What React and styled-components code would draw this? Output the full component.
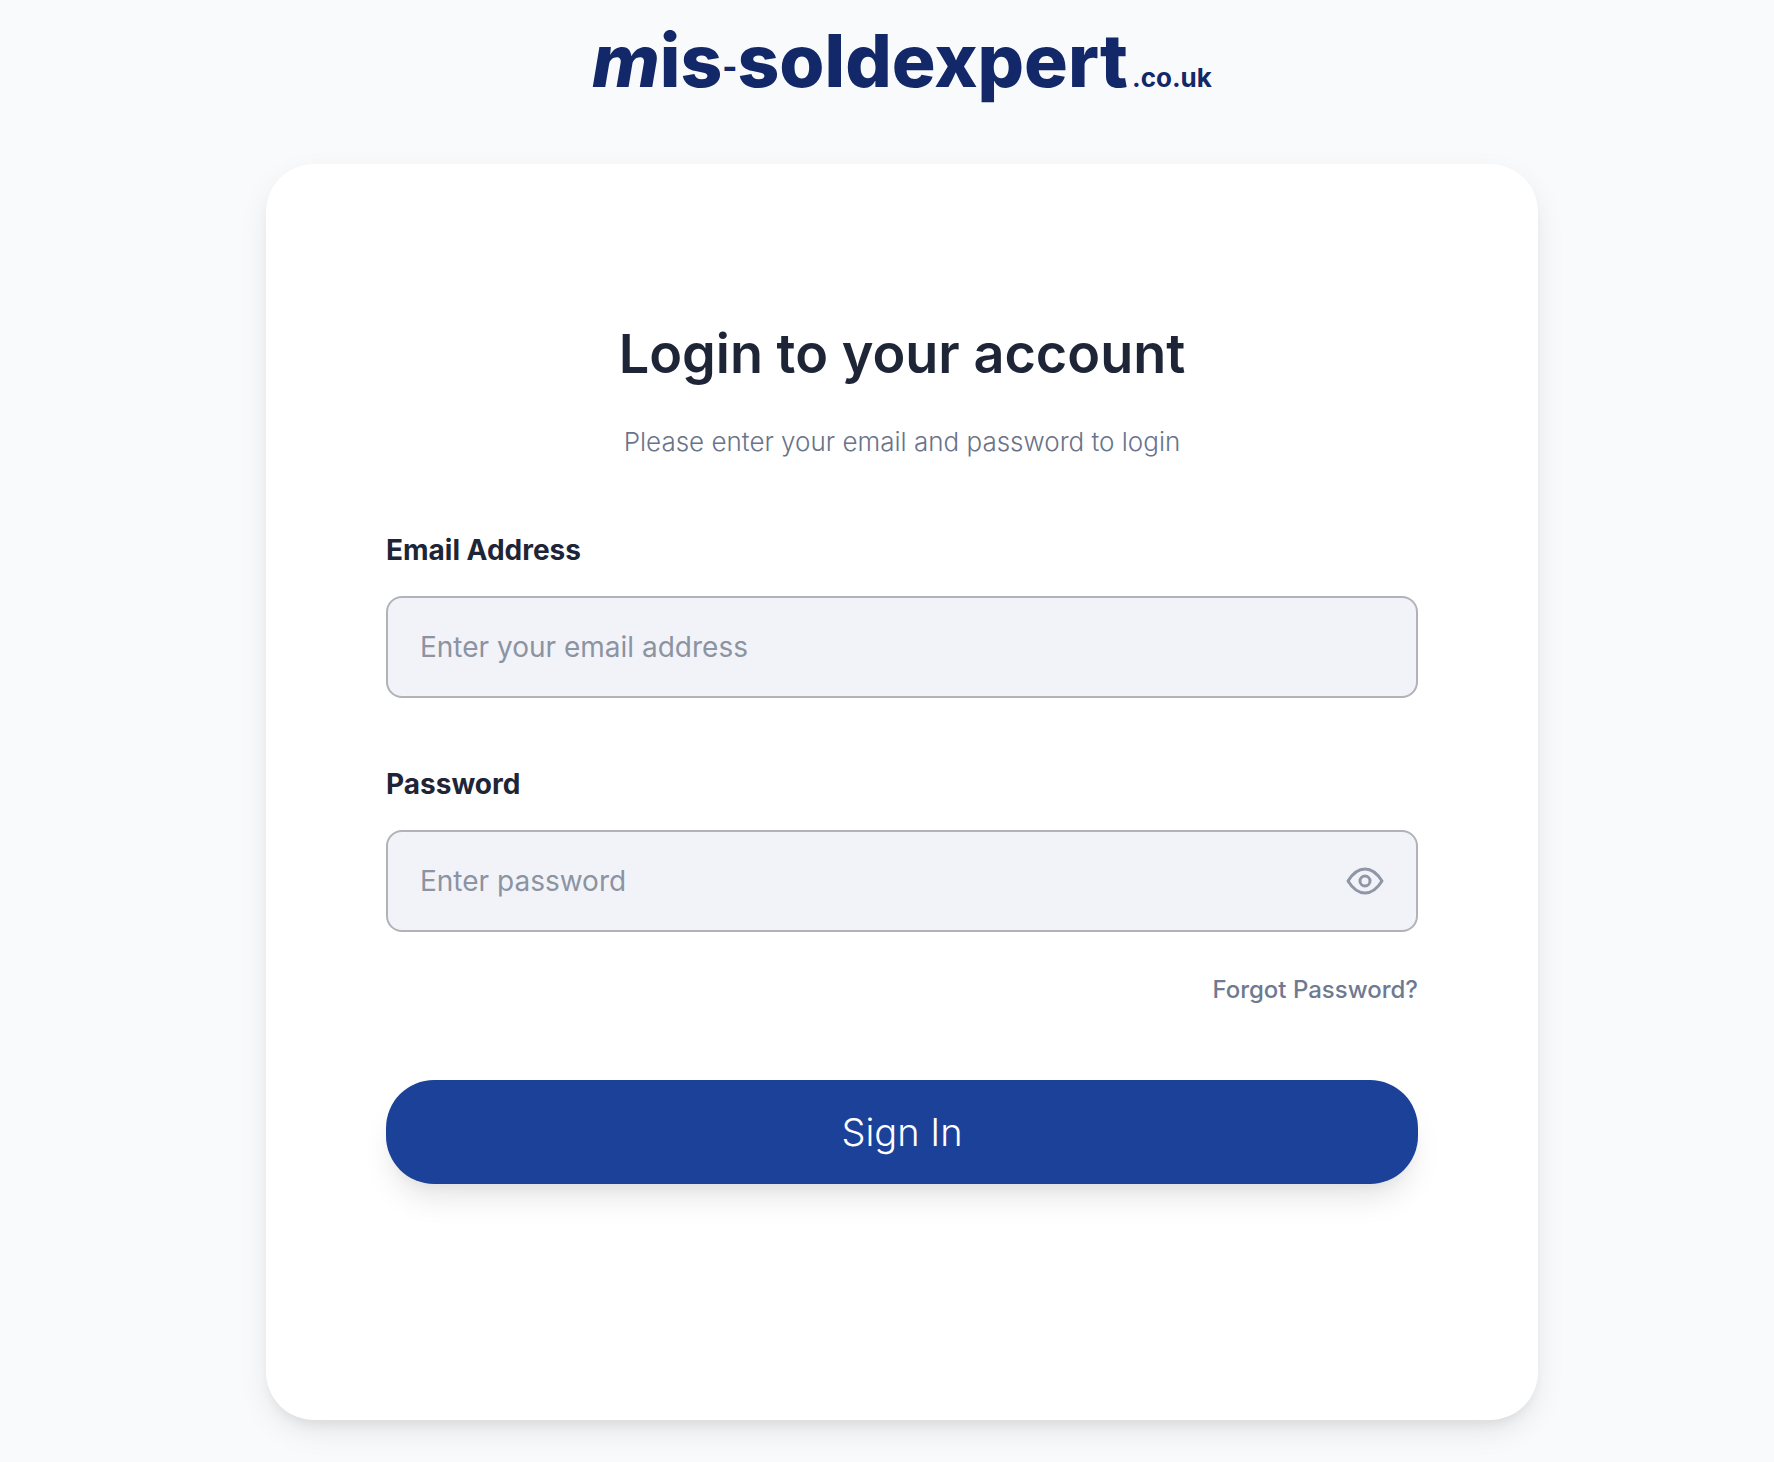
import React, { useState } from "react";
import styled, { createGlobalStyle } from "styled-components";

const GlobalStyle = createGlobalStyle`
  * {
    box-sizing: border-box;
  }

  body {
    margin: 0;
    background-color: #f9fafc;
    font-family: Inter, "Liberation Sans", sans-serif;
  }
`;

const StyledPage = styled.div`
  min-height: 100vh;
  padding: 24px 0 42px 30px;
  display: flex;
  flex-direction: column;
  align-items: center;
`;

const Logo = styled.a`
  height: 140px;
  display: flex;
  align-items: baseline;
  color: #122868;
  font-size: 73px;
  font-weight: 800;
  line-height: 74px;
  text-decoration: none;
`;

const LogoSlant = styled.span`
  font-style: italic;
`;

const LogoDash = styled.span`
  align-self: flex-start;
  font-size: 32px;
  line-height: 86px;
`;

const LogoDomain = styled.span`
  margin-left: 4px;
  font-size: 26px;
  font-weight: 700;
`;

const Card = styled.main`
  width: 73%;
  max-width: 1272px;
  min-height: 1256px;
  padding: 154px 120px;
  border-radius: 48px;
  background-color: #fff;
  box-shadow: 0 12px 32px -4px rgba(0, 0, 0, 0.1),
    0 8px 12px -4px rgba(0, 0, 0, 0.06);
`;

const Title = styled.h1`
  margin: 0;
  color: #1e2536;
  font-size: 54px;
  font-weight: 600;
  line-height: 72px;
  text-align: center;
`;

const Subtitle = styled.p`
  margin: 32px 0 68px;
  color: #69738a;
  font-size: 26px;
  font-weight: 300;
  line-height: 40px;
  text-align: center;
`;

const Field = styled.div`
  margin-bottom: ${(props) => (props.$last ? "40px" : "66px")};
`;

const Label = styled.label`
  display: block;
  margin-bottom: 26px;
  color: #1e2536;
  font-size: 28px;
  font-weight: 700;
  line-height: 40px;
`;

const InputBox = styled.div`
  height: 102px;
  display: flex;
  align-items: center;
  border: 2px solid #b1b3b8;
  border-radius: 16px;
  background-color: #f2f3f9;
`;

const Input = styled.input`
  flex: 1;
  min-width: 0;
  height: 100%;
  padding: 0 32px;
  border: none;
  outline: none;
  background: none;
  color: #1e2536;
  font-family: inherit;
  font-size: 28px;

  &::placeholder {
    color: #8c93a1;
    opacity: 1;
  }
`;

const EyeButton = styled.button`
  margin-right: 32px;
  padding: 0;
  display: flex;
  border: none;
  background: none;
  color: #8f96a5;
  cursor: pointer;
`;

const ForgotRow = styled.div`
  margin-bottom: 72px;
  display: flex;
  justify-content: flex-end;
`;

const ForgotLink = styled.a`
  color: #6f7a90;
  font-size: 24px;
  font-weight: 500;
  line-height: 36px;
  text-decoration: none;
`;

const SubmitButton = styled.button`
  width: 100%;
  height: 104px;
  border: none;
  border-radius: 48px;
  background-color: #1c4199;
  box-shadow: 0 20px 30px -6px rgba(0, 0, 0, 0.1),
    0 8px 12px -4px rgba(0, 0, 0, 0.04);
  color: #fff;
  font-family: inherit;
  font-size: 38px;
  font-weight: 300;
  cursor: pointer;
`;

const EyeIcon = () => (
  <svg width="38" height="28" viewBox="0 0 38 28" fill="none" aria-hidden="true">
    <path
      d="M2 14C7 6 12 2 19 2s12 4 17 12c-5 8-10 12-17 12S7 22 2 14Z"
      stroke="currentColor"
      strokeWidth="3"
      strokeLinejoin="round"
    />
    <circle cx="19" cy="14" r="5" stroke="currentColor" strokeWidth="3" />
  </svg>
);

const App = () => {
  const [showPassword, setShowPassword] = useState(false);

  return (
    <StyledPage>
      <GlobalStyle />
      <Logo href="#">
        <LogoSlant>m</LogoSlant>is<LogoDash>-</LogoDash>soldexpert
        <LogoDomain>.co.uk</LogoDomain>
      </Logo>
      <Card>
        <Title>Login to your account</Title>
        <Subtitle>Please enter your email and password to login</Subtitle>
        <form onSubmit={(e) => e.preventDefault()}>
          <Field>
            <Label htmlFor="email">Email Address</Label>
            <InputBox>
              <Input
                id="email"
                type="email"
                placeholder="Enter your email address"
              />
            </InputBox>
          </Field>
          <Field $last>
            <Label htmlFor="password">Password</Label>
            <InputBox>
              <Input
                id="password"
                type={showPassword ? "text" : "password"}
                placeholder="Enter password"
              />
              <EyeButton
                type="button"
                aria-label="Show password"
                onClick={() => setShowPassword(!showPassword)}
              >
                <EyeIcon />
              </EyeButton>
            </InputBox>
          </Field>
          <ForgotRow>
            <ForgotLink href="#">Forgot Password?</ForgotLink>
          </ForgotRow>
          <SubmitButton type="submit">Sign In</SubmitButton>
        </form>
      </Card>
    </StyledPage>
  );
};

export default App;
